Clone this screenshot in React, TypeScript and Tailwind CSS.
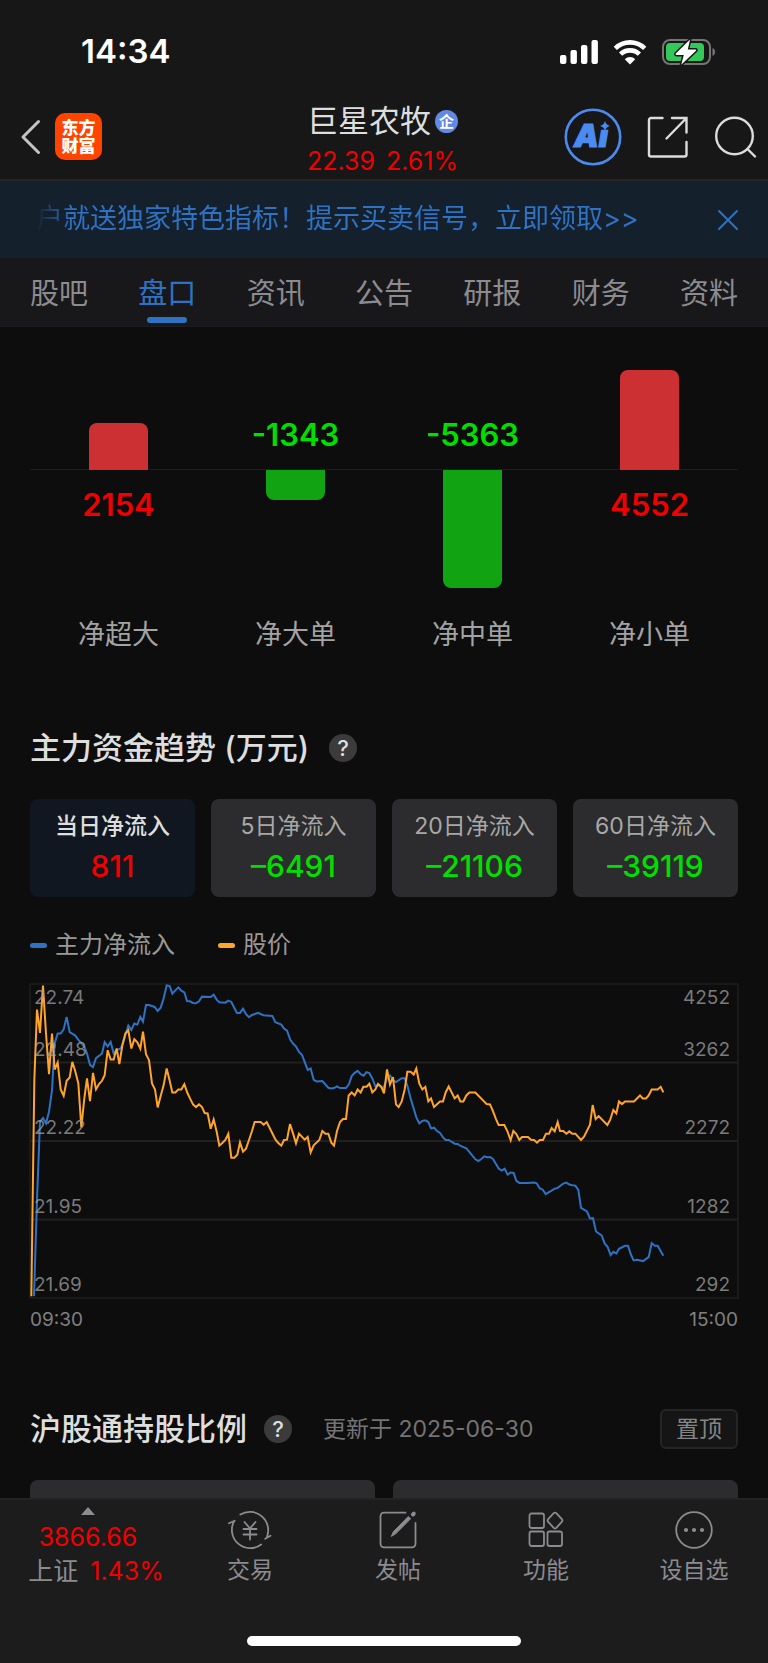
import clsx from "clsx";

const flows = [
  { label: "净超大", value: 2154, bar: "h-[47px]" },
  { label: "净大单", value: -1343, bar: "h-[30px]" },
  { label: "净中单", value: -5363, bar: "h-[118px]" },
  { label: "净小单", value: 4552, bar: "h-[100px]" },
];

const tabs = ["股吧", "盘口", "资讯", "公告", "研报", "财务", "资料"];

const periods = [
  { label: "当日净流入", value: "811" },
  { label: "5日净流入", value: "–6491" },
  { label: "20日净流入", value: "–21106" },
  { label: "60日净流入", value: "–39119" },
];

const bands = [
  { price: "22.48", flow: "3262" },
  { price: "22.22", flow: "2272" },
  { price: "21.95", flow: "1282" },
  { price: "21.69", flow: "292" },
];

const pricePoints =
  "34,980 43,330 51,118 60,188 69,46 78,190 87,312 96,190 104,298 113,277 122,358 131,377 140,332 149,322 157,275 166,304 175,340 184,472 193,385 201,325 210,393 219,308 228,358 237,342 246,332 254,315 263,240 272,268 281,268 290,235 298,282 307,226 316,190 325,180 334,235 343,207 352,216 361,235 369,184 378,252 387,270 396,340 405,358 413,412 422,378 431,345 440,295 449,332 457,367 466,367 475,358 484,358 493,342 502,368 510,385 519,403 528,411 537,403 546,411 554,429 563,430 572,476 581,448 590,485 598,527 607,519 616,510 625,491 634,563 643,563 652,554 660,517 669,545 678,536 687,510 696,483 704,456 722,456 731,464 740,456 749,474 758,492 767,510 775,519 784,527 792,510 801,509 810,462 819,490 828,520 837,491 854,509 863,501 872,547 881,526 898,510 907,483 916,491 925,491 934,518 942,527 951,483 960,456 969,447 978,447 986,376 995,367 1004,376 1013,358 1022,367 1030,350 1040,350 1048,341 1057,367 1066,358 1074,341 1084,350 1092,370 1101,298 1110,343 1119,321 1128,403 1136,411 1145,394 1154,358 1162,305 1172,305 1181,313 1189,295 1198,341 1207,358 1216,350 1225,394 1233,385 1242,411 1260,394 1269,394 1277,367 1286,349 1304,385 1313,376 1321,394 1330,394 1339,376 1348,367 1366,367 1400,402 1410,403 1418,421 1428,447 1436,465 1453,465 1462,483 1472,511 1480,483 1489,492 1498,510 1506,501 1524,501 1533,509 1542,510 1551,518 1559,510 1569,510 1578,491 1587,491 1595,474 1604,484 1613,456 1620,483 1630,483 1639,491 1648,484 1657,491 1666,491 1683,510 1692,500 1710,464 1718,405 1727,447 1736,438 1762,465 1771,448 1780,420 1789,430 1797,394 1806,402 1815,394 1842,394 1860,376 1868,385 1878,385 1886,376 1895,358 1913,358 1922,350 1930,367";

const flowPoints =
  "42,980 51,690 60,455 69,444 78,460 87,425 96,360 104,220 113,190 122,190 131,177 140,140 149,186 166,196 175,209 184,218 193,230 201,250 210,284 219,291 228,264 246,250 254,216 263,229 272,215 281,250 290,240 302,235 310,215 325,166 334,179 343,160 352,163 361,140 369,154 378,104 387,104 404,110 413,122 422,112 431,84 440,45 449,47 457,70 466,60 475,51 484,61 493,66 501,92 510,93 519,98 528,99 537,93 546,79 572,80 581,73 590,88 598,96 616,97 625,91 634,95 643,113 651,128 660,128 669,115 678,132 687,141 696,134 714,128 730,135 757,137 766,156 784,163 792,175 801,181 811,209 819,220 828,229 837,245 846,254 863,299 872,295 881,329 890,334 907,333 925,353 934,355 942,354 951,349 960,354 978,354 987,342 995,318 1004,308 1013,302 1022,312 1031,317 1039,306 1048,309 1057,325 1066,348 1075,345 1090,355 1101,325 1110,316 1119,330 1128,336 1145,324 1154,324 1163,350 1172,385 1189,442 1198,460 1207,453 1216,451 1225,456 1233,475 1242,473 1251,483 1260,489 1269,502 1277,510 1286,510 1304,521 1313,522 1322,528 1339,535 1348,546 1366,568 1375,573 1384,567 1393,559 1401,562 1410,561 1419,567 1436,596 1445,602 1454,596 1463,614 1472,608 1481,609 1489,633 1498,639 1524,639 1542,638 1550,640 1559,655 1569,660 1577,673 1603,657 1613,654 1630,641 1639,638 1648,644 1657,646 1666,647 1675,660 1683,714 1701,725 1710,746 1719,745 1728,785 1745,797 1754,821 1763,832 1772,856 1780,846 1789,851 1797,837 1815,828 1824,828 1833,855 1841,872 1851,870 1869,874 1886,862 1895,820 1904,828 1913,828 1930,858";

function StatusBar() {
  return (
    <div className="flex h-24 items-center justify-between pt-2 pr-[51px] pl-[81px]">
      <span className="text-[33px] font-semibold text-white">14:34</span>
      <div className="flex items-center gap-[14px]">
        <svg width="40" height="26" viewBox="0 0 40 26" fill="#fff">
          <rect x="1" y="16" width="6.4" height="9" rx="2" />
          <rect x="11.5" y="11" width="6.4" height="14" rx="2" />
          <rect x="22" y="6" width="6.4" height="19" rx="2" />
          <rect x="32.5" y="1" width="6.4" height="24" rx="2" />
        </svg>
        <svg width="34" height="26" viewBox="0 0 34 26">
          <g fill="none" stroke="#fff" strokeWidth="4.6">
            <path d="M2.3 9.4a21 21 0 0 1 29.4 0" />
            <path d="M7.6 15.2a13.5 13.5 0 0 1 18.8 0" />
          </g>
          <path d="M17 25.4l-5.2-5.2a7.4 7.4 0 0 1 10.4 0z" fill="#fff" />
        </svg>
        <svg width="56" height="28" viewBox="0 0 56 28">
          <rect x="2" y="2" width="47" height="24" rx="7" fill="none" stroke="#757575" strokeWidth="2" />
          <path d="M51.5 10v8c1.6-.6 2.6-2.2 2.6-4s-1-3.4-2.6-4z" fill="#757575" />
          <rect x="5" y="5" width="38" height="18" rx="4" fill="#34c759" />
          <path
            d="M29 1.5L14.8 15.6c-.5.6-.2 1.4.6 1.4h7.4l-2.6 9.8L35 12.8c.5-.6.2-1.4-.6-1.4h-7.6z"
            fill="#fff"
            stroke="#171717"
            strokeWidth="3"
            paintOrder="stroke"
          />
        </svg>
      </div>
    </div>
  );
}

function Header() {
  return (
    <div className="grid h-[85px] grid-cols-[1fr_auto_1fr] items-center border-b-2 border-[#262626] pb-1 pr-[3px]">
      <div className="flex items-center gap-[13px] pl-5">
        <button aria-label="返回">
          <svg width="22" height="38" viewBox="0 0 22 38" fill="none" stroke="#c4c4c4" strokeWidth="3" strokeLinecap="round">
            <path d="M18.5 3.5L3 19l15.5 15.5" strokeLinejoin="round" />
          </svg>
        </button>
        <a
          href="#"
          className="flex size-[47px] flex-col items-center justify-center rounded-[10px] bg-[#ff4400] text-[17px] leading-[18px] font-black text-white"
        >
          <span>东方</span>
          <span>财富</span>
        </a>
      </div>

      <div className="pt-[7px]">
        <div className="flex items-center gap-1">
          <h1 className="text-[31px] leading-9 text-[#dedede]">巨星农牧</h1>
          <span className="flex size-[23px] items-center justify-center rounded-full bg-[#6289e6] text-[15px] leading-none font-bold text-white">
            企
          </span>
        </div>
        <div className="mt-1.5 flex justify-between text-[25px] leading-8 text-[#f00000]">
          <span>22.39</span>
          <span>2.61%</span>
        </div>
      </div>

      <div className="flex items-center justify-end gap-[25px] pr-[7px]">
        <button aria-label="Ai">
          <svg width="58" height="58" viewBox="0 0 58 58">
            <clipPath id="ai-stem">
              <path d="M0 0H33V21.5H58V58H0z" />
            </clipPath>
            <circle cx="29" cy="29" r="27.2" fill="none" stroke="#4b8bf0" strokeWidth="2.6" />
            <g clipPath="url(#ai-stem)">
              <text x="10" y="39" fill="#4b8bf0" stroke="#4b8bf0" strokeWidth="1.2" fontSize="31" fontWeight="900" fontStyle="italic">
                Ai
              </text>
            </g>
            <path d="M41 13c1 3 2 4 5 5-3 1-4 2-5 5-1-3-2-4-5-5 3-1 4-2 5-5z" fill="#4b8bf0" />
          </svg>
        </button>
        <button aria-label="分享">
          <svg width="42" height="42" viewBox="0 0 42 42" fill="none" stroke="#dcdcdc" strokeWidth="2.4" strokeLinecap="round">
            <path d="M15.5 2H4a2 2 0 0 0-2 2v34.500a2 2 0 0 0 2 2h33.500a2 2 0 0 0 2-2V26" />
            <path d="M25 2h14.500v14.500M39 2.500L19.500 22.500" />
          </svg>
        </button>
        <button aria-label="搜索">
          <svg width="44" height="42" viewBox="0 0 44 42" fill="none" stroke="#dcdcdc" strokeWidth="2.4" strokeLinecap="round">
            <circle cx="20.5" cy="20" r="18.3" />
            <path d="M33.5 33l7.500 7.500" />
          </svg>
        </button>
      </div>
    </div>
  );
}

function Banner() {
  return (
    <div className="flex h-[77px] items-center justify-between bg-[#15202d] pr-7 pl-9 text-[#2f72c4]">
      <a
        href="#"
        className="text-[27px] whitespace-nowrap [mask-image:linear-gradient(to_right,transparent,black_36px)]"
      >
        户就送独家特色指标！提示买卖信号，立即领取&gt;&gt;
      </a>
      <button aria-label="关闭">
        <svg width="24" height="24" viewBox="0 0 24 24" stroke="currentColor" strokeWidth="2" strokeLinecap="round">
          <path d="M3 3l18 18M21 3L3 21" />
        </svg>
      </button>
    </div>
  );
}

function Tabs() {
  return (
    <nav className="flex justify-between border-b border-[#1d1d20] bg-[#18181a] px-[30px] pt-[18px] pb-[3px]">
      {tabs.map((tab) => (
        <a key={tab} href="#" className="flex flex-col items-center gap-[5px]">
          <span className={clsx("text-[29px] leading-9", tab === "盘口" ? "text-[#2f72c4]" : "text-[#8b8b90]")}>{tab}</span>
          {tab === "盘口" && <span className="h-1.5 w-10 rounded-full bg-[#2f72c4]" />}
        </a>
      ))}
    </nav>
  );
}

function FlowBars() {
  return (
    <section className="grid grid-cols-4 pt-[43px] text-center">
      {flows.map((f) => {
        const up = f.value > 0;
        const value = (
          <span className={clsx("my-[17px] text-[31px] leading-9 font-semibold", up ? "text-[#f00000]" : "text-[#00e000]")}>
            {f.value}
          </span>
        );
        const bar = <span className={clsx("w-[59px]", f.bar, up ? "rounded-t-lg bg-[#cd3032]" : "rounded-b-lg bg-[#12a312]")} />;
        return (
          <div key={f.label}>
            <div className="flex h-[100px] flex-col items-center justify-end">{up ? bar : value}</div>
            <div className="flex h-[118px] flex-col items-center shadow-[0_-1px_0_#1e1e1e]">{up ? value : bar}</div>
            <p className="mt-[29px] text-[27px] leading-9 text-[#a3a3a3]">{f.label}</p>
          </div>
        );
      })}
    </section>
  );
}

function Help() {
  return (
    <button className="flex size-7 items-center justify-center rounded-full bg-[#3b3b3b] text-[22px] leading-none font-medium text-[#dedede]">
      ?
    </button>
  );
}

function Trend() {
  return (
    <section className="mt-[75px]">
      <div className="flex items-center gap-5">
        <h2 className="text-[31px] leading-10 font-medium text-[#dedede]">主力资金趋势 (万元)</h2>
        <Help />
      </div>

      <div className="mt-[31px] grid grid-cols-4 gap-4">
        {periods.map((p, i) => (
          <button key={p.label} className={clsx("rounded-lg py-[11px]", i === 0 ? "bg-[#101720]" : "bg-[#2c2c2e]")}>
            <span className={clsx("block text-[23px] leading-8", i === 0 ? "font-medium text-[#dedede]" : "text-[#a8a8a8]")}>
              {p.label}
            </span>
            <span className={clsx("mt-1 block text-[30px] leading-10 font-medium", i === 0 ? "text-[#f00000]" : "text-[#00e000]")}>
              {p.value}
            </span>
          </button>
        ))}
      </div>

      <div className="mt-8 flex gap-[43px] text-2xl leading-8 text-[#999999]">
        <span className="flex items-center gap-2">
          <i className="h-[5px] w-[17px] rounded-full bg-[#2f72c4]" />
          主力净流入
        </span>
        <span className="flex items-center gap-2">
          <i className="h-[5px] w-[17px] rounded-full bg-[#ffa52c]" />
          股价
        </span>
      </div>

      <div className="relative mt-[23px] h-[314px]">
        <svg className="size-full overflow-visible" viewBox="30 41 2124 944" preserveAspectRatio="none" fill="none">
          <g stroke="#202020" strokeWidth="6">
            <rect x="30" y="41" width="2124" height="944" strokeWidth="4" />
            <path d="M30 277H2154M30 513H2154M30 749H2154" />
          </g>
          <polyline points={flowPoints} stroke="#2f72c4" strokeWidth="6" />
          <polyline points={pricePoints} stroke="#ffa52c" strokeWidth="6" />
        </svg>
        <div className="absolute inset-0 grid grid-rows-4 pr-2 pl-1 text-[19px] leading-6 text-[#a0a0a0]/75">
          {bands.map((b, i) => (
            <div key={b.flow} className={clsx("flex flex-col pt-0.5 pb-px", i === 0 ? "justify-between" : "justify-end")}>
              {i === 0 && (
                <div className="flex justify-between">
                  <span>22.74</span>
                  <span>4252</span>
                </div>
              )}
              <div className="flex justify-between">
                <span>{b.price}</span>
                <span>{b.flow}</span>
              </div>
            </div>
          ))}
        </div>
      </div>
      <div className="mt-[10px] flex justify-between text-[19px] leading-6 text-[#808080]">
        <span>09:30</span>
        <span>15:00</span>
      </div>
    </section>
  );
}

function Holding() {
  return (
    <section className="mt-[77px]">
      <div className="flex items-center">
        <h2 className="text-[31px] leading-10 font-medium text-[#dedede]">沪股通持股比例</h2>
        <div className="mr-[31px] ml-[17px]">
          <Help />
        </div>
        <span className="text-[23px] text-[#747474]">更新于 2025-06-30</span>
        <button className="ml-auto h-10 rounded-md border-2 border-[#252525] bg-[#151515] px-[14px] text-[23px] leading-8 text-[#858585]">
          置顶
        </button>
      </div>
      <div className="mt-[31px] grid grid-cols-2 gap-[18px]">
        <div className="h-[120px] rounded-lg bg-[#2c2c2e]" />
        <div className="h-[120px] rounded-lg bg-[#2c2c2e]" />
      </div>
    </section>
  );
}

const actions = [
  {
    label: "交易",
    icon: (
      <>
        <path d="M12.3 4.600A18.300 18.300 0 0 1 39 26.700M37.200 28.700l5.300-3" />
        <path d="M33.200 34.500A18.300 18.300 0 0 1 6.200 11M1 13.300l5.700-2.600" />
        <path d="M16.500 12l5.500 6.500 5.500-6.500M15.500 19h13M15.500 24.500h13M22 18.500v11" />
      </>
    ),
  },
  {
    label: "发帖",
    icon: (
      <>
        <path d="M29.5 2.700H8a3.500 3.500 0 0 0-3.500 3.500v27.600A3.500 3.500 0 0 0 8 37.300h28a3.500 3.500 0 0 0 3.500-3.500V13" />
        <path d="M15.5 26l1.800-4.200L32.300 6.500l2.300 2.300-14.900 15z" fill="currentColor" strokeWidth="1" />
        <path d="M37 4.500l.8-.8" strokeWidth="4" />
      </>
    ),
  },
  {
    label: "功能",
    icon: (
      <>
        <rect x="5.5" y="3.5" width="14.5" height="14.5" rx="2" />
        <rect x="5.5" y="21.5" width="14.5" height="14.5" rx="2" />
        <rect x="23.5" y="21.5" width="14.5" height="14.5" rx="2" />
        <path d="M29.700 3.200q1.300-1.200 2.600 0l5.500 6q1.200 1.300 0 2.600l-5.500 6q-1.300 1.200-2.600 0l-5.500-6q-1.200-1.300 0-2.600z" />
      </>
    ),
  },
  {
    label: "设自选",
    icon: (
      <>
        <circle cx="22" cy="20" r="17.8" />
        <path d="M14 20h.01M22 20h.01M30 20h.01" strokeWidth="4.2" />
      </>
    ),
  },
];

function BottomNav() {
  return (
    <footer className="border-t-2 border-[#232323] bg-[#1c1c1c] pb-[17px]">
      <div className="grid grid-cols-[176px_repeat(4,1fr)] text-[23px] leading-8 text-[#8b8b90]">
        <a href="#" className="flex flex-col items-center pt-[7px]">
          <svg width="14" height="8" viewBox="0 0 14 8" fill="currentColor">
            <path d="M7 0l7 8H0z" />
          </svg>
          <span className="mt-1.5 text-[25px] leading-8 text-[#f00000]">3866.66</span>
          <span className="mt-0.5 flex gap-3 pl-4 text-[25px] leading-8">
            <span>上证</span>
            <span className="text-[#f00000]">1.43%</span>
          </span>
        </a>
        {actions.map((a) => (
          <a key={a.label} href="#" className="flex flex-col items-center pt-[10px]">
            <svg
              className="overflow-visible"
              width="44"
              height="40"
              viewBox="0 0 44 40"
              fill="none"
              stroke="currentColor"
              strokeWidth="1.8"
              strokeLinecap="round"
              strokeLinejoin="round"
            >
              {a.icon}
            </svg>
            <span className="mt-1">{a.label}</span>
          </a>
        ))}
      </div>
      <div className="mx-auto mt-[49px] h-[10px] w-[274px] rounded-full bg-white" />
    </footer>
  );
}

export default function App() {
  return (
    <div className="flex h-screen flex-col overflow-hidden bg-[#0d0d0d] font-[Inter,'Noto_Sans_CJK_SC',sans-serif]" lang="zh-CN">
      <header className="shrink-0 bg-[#171717]">
        <StatusBar />
        <Header />
        <Banner />
        <Tabs />
      </header>
      <main className="min-h-0 flex-1 overflow-hidden px-[30px]">
        <FlowBars />
        <Trend />
        <Holding />
      </main>
      <BottomNav />
    </div>
  );
}
